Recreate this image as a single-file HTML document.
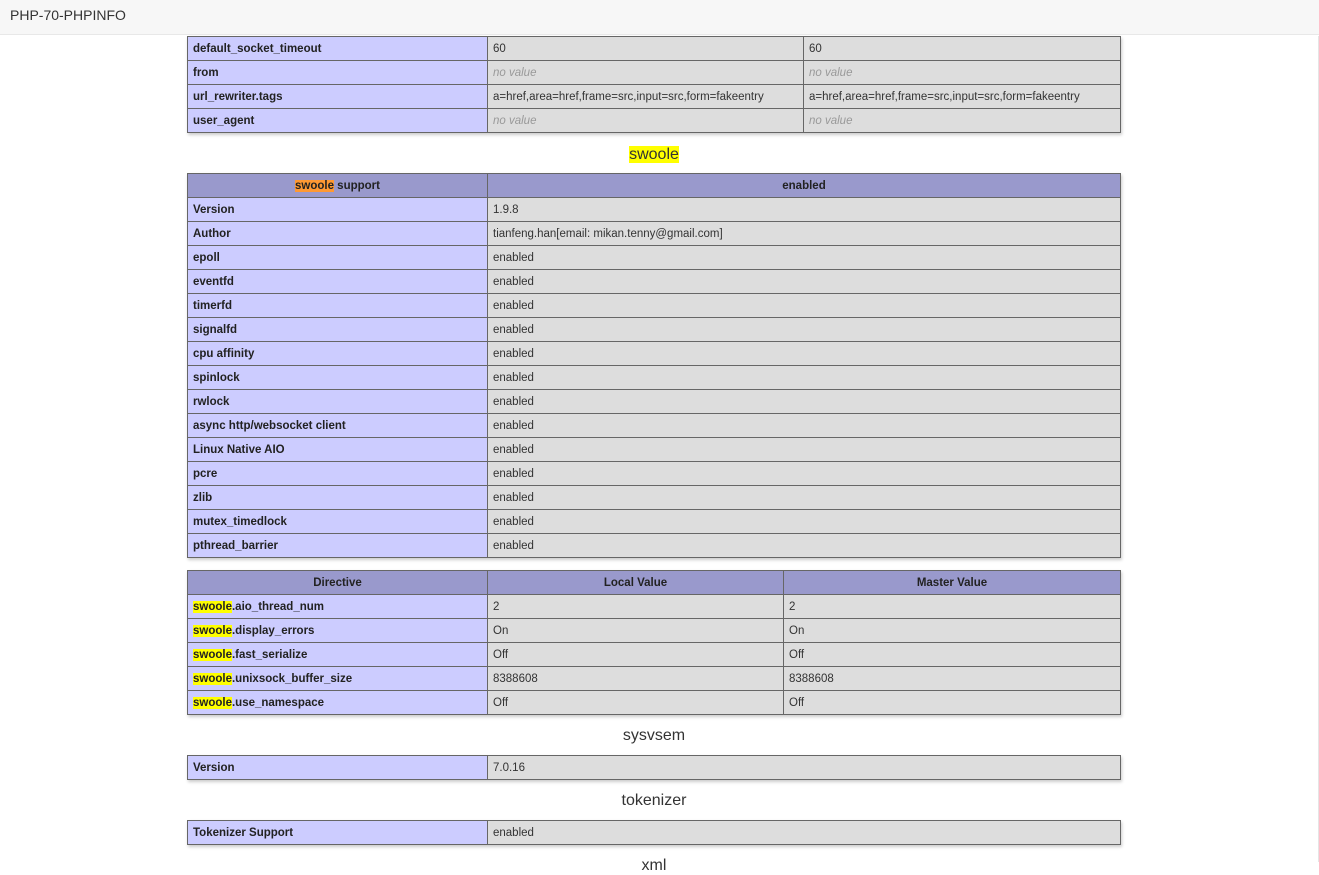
<!DOCTYPE html>
<html><head><meta charset="utf-8"><style>
body{margin:0;background:#fff;font-family:"Liberation Sans",sans-serif;color:#222;width:1319px;height:862px;overflow:hidden;position:relative}
.hd{position:absolute;left:0;top:0;width:1319px;height:35px;background:#f7f7f7;border-bottom:1px solid #e8e8e8;font-size:14px;color:#333;line-height:30px;padding-left:10px;box-sizing:border-box}
.rb{position:absolute;right:0;top:36px;width:1px;height:826px;background:#e5e5e5}
table{position:absolute;left:187px;border-collapse:collapse;width:934px;box-shadow:1px 2px 3px #ccc;font-size:11.5px;table-layout:fixed}
td,th{border:1px solid #666;height:23px;padding:1px 5px 0;box-sizing:border-box;white-space:nowrap;overflow:hidden}
tr{height:24px}
td.e{background:#ccf;font-weight:bold;color:#222}
td.v{background:#ddd;color:#333}
th{background:#99c;font-weight:bold;color:#222}
i{color:#999}
h2{position:absolute;left:187px;width:934px;text-align:center;font-size:16px;font-weight:normal;margin:0;color:#333}
.y{background:#ff0}.o{background:#f93}
</style></head><body>
<div class="hd">PHP-70-PHPINFO</div><div class="rb"></div>
<table style="top:36px"><colgroup><col style="width:300px"><col style="width:316px"><col></colgroup>
<tr><td class="e">default_socket_timeout</td><td class="v">60</td><td class="v">60</td></tr>
<tr><td class="e">from</td><td class="v"><i>no value</i></td><td class="v"><i>no value</i></td></tr>
<tr><td class="e">url_rewriter.tags</td><td class="v">a=href,area=href,frame=src,input=src,form=fakeentry</td><td class="v">a=href,area=href,frame=src,input=src,form=fakeentry</td></tr>
<tr><td class="e">user_agent</td><td class="v"><i>no value</i></td><td class="v"><i>no value</i></td></tr>
</table>
<h2 style="top:146px"><span class="y">swoole</span></h2>
<table style="top:173px"><colgroup><col style="width:300px"><col></colgroup>
<tr><th><span class="o">swoole</span> support</th><th>enabled</th></tr>
<tr><td class="e">Version</td><td class="v">1.9.8</td></tr>
<tr><td class="e">Author</td><td class="v">tianfeng.han[email: mikan.tenny@gmail.com]</td></tr>
<tr><td class="e">epoll</td><td class="v">enabled</td></tr>
<tr><td class="e">eventfd</td><td class="v">enabled</td></tr>
<tr><td class="e">timerfd</td><td class="v">enabled</td></tr>
<tr><td class="e">signalfd</td><td class="v">enabled</td></tr>
<tr><td class="e">cpu affinity</td><td class="v">enabled</td></tr>
<tr><td class="e">spinlock</td><td class="v">enabled</td></tr>
<tr><td class="e">rwlock</td><td class="v">enabled</td></tr>
<tr><td class="e">async http/websocket client</td><td class="v">enabled</td></tr>
<tr><td class="e">Linux Native AIO</td><td class="v">enabled</td></tr>
<tr><td class="e">pcre</td><td class="v">enabled</td></tr>
<tr><td class="e">zlib</td><td class="v">enabled</td></tr>
<tr><td class="e">mutex_timedlock</td><td class="v">enabled</td></tr>
<tr><td class="e">pthread_barrier</td><td class="v">enabled</td></tr>
</table>
<table style="top:570px"><colgroup><col style="width:300px"><col style="width:296px"><col></colgroup>
<tr><th>Directive</th><th>Local Value</th><th>Master Value</th></tr>
<tr><td class="e"><span class="y">swoole</span>.aio_thread_num</td><td class="v">2</td><td class="v">2</td></tr>
<tr><td class="e"><span class="y">swoole</span>.display_errors</td><td class="v">On</td><td class="v">On</td></tr>
<tr><td class="e"><span class="y">swoole</span>.fast_serialize</td><td class="v">Off</td><td class="v">Off</td></tr>
<tr><td class="e"><span class="y">swoole</span>.unixsock_buffer_size</td><td class="v">8388608</td><td class="v">8388608</td></tr>
<tr><td class="e"><span class="y">swoole</span>.use_namespace</td><td class="v">Off</td><td class="v">Off</td></tr>
</table>
<h2 style="top:727px">sysvsem</h2>
<table style="top:755px"><colgroup><col style="width:300px"><col></colgroup>
<tr><td class="e">Version</td><td class="v">7.0.16</td></tr></table>
<h2 style="top:792px">tokenizer</h2>
<table style="top:820px"><colgroup><col style="width:300px"><col></colgroup>
<tr><td class="e">Tokenizer Support</td><td class="v">enabled</td></tr></table>
<h2 style="top:857px">xml</h2>
</body></html>
